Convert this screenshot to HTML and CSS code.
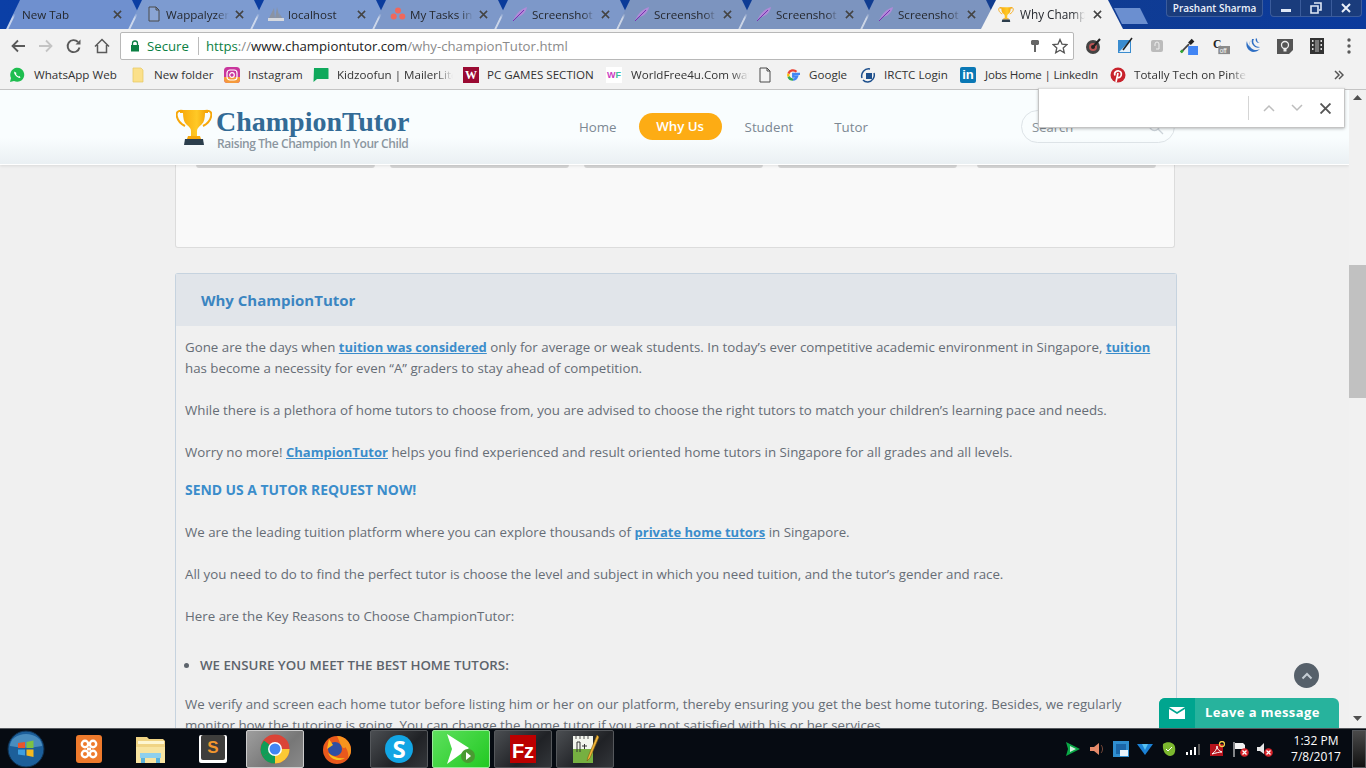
FILE: index.html
```html
<!DOCTYPE html>
<html lang="en">
<head>
<meta charset="utf-8">
<title>Why ChampionTutor</title>
<link rel="stylesheet" href="styles.css">
</head>
<body>
<svg class="defs" width="0" height="0">
  <defs>
    <linearGradient id="gold" x1="0" x2="1" y1="0" y2="0"><stop offset="0" stop-color="#f7a70a"/><stop offset=".6" stop-color="#ffc926"/><stop offset="1" stop-color="#f29e05"/></linearGradient>
    <symbol id="trophy" viewBox="0 0 36 38">
      <path d="M4 3h28v3h-3c0 5-1 9-3 11l-1 1c-2 2-4 3-4 6v5h-6v-5c0-3-2-4-4-6l-1-1C8 15 7 11 7 6H4z" fill="url(#gold)"/>
      <path d="M7 4C1 3 0 6 1 10c1 4 4 7 8 9M29 4c6-1 7 2 6 6-1 4-4 7-8 9" fill="none" stroke="#f7a70a" stroke-width="2"/>
      <path d="M12 29h12l1 3H11z" fill="#f7a70a"/>
      <path d="M9 32h18l1 6H8z" fill="#2c3e4c"/>
    </symbol>
    <symbol id="feather" viewBox="0 0 16 16">
      <path d="M1 15C3 9 8 3 15 1c-1 6-6 10-11 10z" fill="#b08ad8"/>
      <path d="M1 15 12 4" stroke="#7a2fb0" stroke-width="1" fill="none"/>
    </symbol>
    <symbol id="doc" viewBox="0 0 16 16">
      <path d="M3 1h7l3 3v11H3zM10 1v3h3" fill="#fff" fill-opacity=".1" stroke="#4a4a4a"/>
    </symbol>
    <symbol id="close" viewBox="0 0 10 10">
      <path d="M1 1l8 8M9 1l-8 8" stroke="#444" stroke-width="1.7" fill="none"/>
    </symbol>
  </defs>
</svg>

<div class="tabstrip">
  <div class="tab"><span class="tab-title">New Tab</span><svg class="tab-x"><use href="#close"/></svg></div>
  <div class="tab"><svg class="fav"><use href="#doc"/></svg><span class="tab-title">Wappalyzer</span><svg class="tab-x"><use href="#close"/></svg></div>
  <div class="tab"><svg class="fav" viewBox="0 0 16 16"><path d="M0 14 6 2l1 11zM7 13 9 1l3 12zM12 13l-1-6 4 6z" fill="#8a93a3"/><rect x="0" y="12" width="16" height="3" fill="#d5d8de"/></svg><span class="tab-title">localhost</span><svg class="tab-x"><use href="#close"/></svg></div>
  <div class="tab"><svg class="fav" viewBox="0 0 16 16"><circle cx="8" cy="4.5" r="3" fill="#f0685c"/><circle cx="3.7" cy="10.5" r="3" fill="#f0685c"/><circle cx="12.3" cy="10.5" r="3" fill="#f0685c"/></svg><span class="tab-title">My Tasks in</span><svg class="tab-x"><use href="#close"/></svg></div>
  <div class="tab"><svg class="fav"><use href="#feather"/></svg><span class="tab-title">Screenshot</span><svg class="tab-x"><use href="#close"/></svg></div>
  <div class="tab"><svg class="fav"><use href="#feather"/></svg><span class="tab-title">Screenshot</span><svg class="tab-x"><use href="#close"/></svg></div>
  <div class="tab"><svg class="fav"><use href="#feather"/></svg><span class="tab-title">Screenshot</span><svg class="tab-x"><use href="#close"/></svg></div>
  <div class="tab"><svg class="fav"><use href="#feather"/></svg><span class="tab-title">Screenshot</span><svg class="tab-x"><use href="#close"/></svg></div>
  <div class="tab tab-active"><svg class="fav"><use href="#trophy"/></svg><span class="tab-title">Why Champ</span><svg class="tab-x"><use href="#close"/></svg></div>
  <div class="newtab"></div>
  <div class="window-area">
    <div class="user-chip">Prashant Sharma</div>
    <div class="win-controls">
      <span class="win-btn"><svg width="12" height="10" viewBox="0 0 12 10"><rect x="1" y="6" width="10" height="3" fill="#dfe8f5"/></svg></span>
      <span class="win-btn"><svg width="12" height="12" viewBox="0 0 12 12"><path d="M4 1h7v7H9M1 4h7v7H1z" fill="none" stroke="#dfe8f5" stroke-width="1.6"/></svg></span>
      <span class="win-btn"><svg width="12" height="10" viewBox="0 0 12 10"><path d="M2 1l8 8M10 1 2 9" stroke="#e9eff8" stroke-width="2"/></svg></span>
    </div>
  </div>
</div>

<div class="toolbar">
  <div class="nav-btns">
    <svg class="tool" viewBox="0 0 16 16"><path d="M15 8H3M8 2.5 2.5 8 8 13.5" fill="none" stroke="#5a5a5a" stroke-width="1.8"/></svg>
    <svg class="tool" viewBox="0 0 16 16"><path d="M1 8h12M8 2.500 13.500 8 8 13.500" fill="none" stroke="#c4c4c4" stroke-width="1.8"/></svg>
    <svg class="tool" viewBox="0 0 16 16"><path d="M13.500 9.500A6 6 0 1 1 12 4" fill="none" stroke="#5a5a5a" stroke-width="1.900"/><path d="M14.500 1.500v5h-5z" fill="#5a5a5a"/></svg>
    <svg class="tool" viewBox="0 0 16 16"><path d="M1 8.500 8 1.500l7 7M3.500 7v7.500h9V7" fill="none" stroke="#5a5a5a" stroke-width="1.500"/></svg>
  </div>
  <div class="omnibox">
    <svg class="lock" viewBox="0 0 10 12"><path d="M2.500 5V3.500a2.500 2.500 0 0 1 5 0V5" fill="none" stroke="#0b8043" stroke-width="1.300"/><rect x="1" y="5" width="8" height="6.500" fill="#0b8043"/></svg>
    <span class="secure">Secure</span>
    <span class="omni-sep"></span>
    <span class="url"><span class="url-scheme">https</span><span class="url-path">://</span>www.championtutor.com<span class="url-path">/why-championTutor.html</span></span>
    <svg class="key" viewBox="0 0 10 14"><path d="M2 1h6l1 1v3L8 6H6v7H4V6H2L1 5V2z" fill="#666"/></svg>
    <svg class="star" viewBox="0 0 16 16"><path d="M8 1.500l2 4.600 5 .5-3.800 3.300 1.100 4.900L8 12.300l-4.300 2.500 1.100-4.900L1 6.600l5-.5z" fill="none" stroke="#555" stroke-width="1.300"/></svg>
  </div>
  <div class="ext-row">
    <svg class="ext" viewBox="0 0 18 18"><circle cx="9" cy="10" r="7" fill="#444"/><circle cx="9" cy="10" r="4" fill="#b55" /><circle cx="9" cy="10" r="2" fill="#222"/><path d="M9 10l7-8" stroke="#222" stroke-width="2"/></svg>
    <svg class="ext" viewBox="0 0 18 18"><path d="M2 3h13v13H2z" fill="#3a8ccf"/><path d="M3 15 14 4v11z" fill="#e8f2fa"/><path d="M7 13 16 1" stroke="#222" stroke-width="1.500"/></svg>
    <svg class="ext" viewBox="0 0 18 18"><rect x="3" y="3" width="12" height="12" rx="2" fill="#bbb"/><path d="M7 9V7a2 2 0 0 1 4 0v5H8" fill="none" stroke="#eee"/></svg>
    <svg class="ext" viewBox="0 0 20 20"><path d="M1 17 10 8" stroke="#444" stroke-width="2"/><path d="M9 6l4-4 3 3-4 4z" fill="#222"/><path d="M3 15 1 17" stroke="#3a3" stroke-width="3"/><rect x="9" y="10" width="11" height="10" fill="#4285f4"/></svg>
    <svg class="ext" viewBox="0 0 20 20"><text x="1" y="12" class="ext-c">C</text><rect x="7" y="10" width="13" height="9" fill="#8a8a8a"/><text x="8.500" y="17.500" class="ext-off">off</text></svg>
    <svg class="ext" viewBox="0 0 18 18"><path d="M3 4c-2 5 1 10 6 11 3 0 5-1 7-3-3 2-7 1-9-1C5 9 5 6 7 3 5 5 5 8 6 10 4 8 3 6 3 4zM8 2c-1 3 0 6 3 8 2 1 4 1 5 0-3 0-5-1-6-3C9 5 9 4 10 2zM12 1c-1 2 0 4 2 5h2c-2 0-3-2-3-4z" fill="#2f6fc4"/></svg>
    <svg class="ext" viewBox="0 0 18 18"><path d="M1 2h16v11l-4 4H1z" fill="#555"/><circle cx="9" cy="8" r="3.500" fill="none" stroke="#eee" stroke-width="1.300"/><rect x="7.500" y="12" width="3" height="2.500" fill="#eee"/></svg>
    <svg class="ext" viewBox="0 0 18 18"><rect x="2" y="1" width="14" height="16" fill="#333"/><path d="M4 3h1.500v2H4zM4 7h1.500v2H4zM4 11h1.500v2H4zM12.500 3H14v2h-1.500zM12.500 7H14v2h-1.500zM12.500 11H14v2h-1.500z" fill="#ddd"/><rect x="7" y="3" width="4" height="12" fill="#777"/></svg>
    <svg class="ext" viewBox="0 0 18 18"><circle cx="9" cy="3" r="1.700" fill="#5a5a5a"/><circle cx="9" cy="9" r="1.700" fill="#5a5a5a"/><circle cx="9" cy="15" r="1.700" fill="#5a5a5a"/></svg>
  </div>
</div>

<div class="bookmarks">
  <div class="bm bm-wa"><svg class="bm-ic" viewBox="0 0 16 16"><path d="M1 15l1-4A7 7 0 1 1 5 14z" fill="#1ebe4f"/><path d="M5.500 4.500c-1 1 0 3 1.500 4.500s3.500 2.500 4.500 1.500l-1-1.500-1 .5c-1-.5-2-1.500-2.500-2.500l.5-1z" fill="#fff"/></svg><span class="bm-t">WhatsApp Web</span></div>
  <div class="bm bm-nf"><svg class="bm-ic" viewBox="0 0 16 16"><path d="M3 1h8l2 2v12H3z" fill="#fbe08a" stroke="#e6c760" stroke-width=".7"/></svg><span class="bm-t">New folder</span></div>
  <div class="bm bm-ig"><svg class="bm-ic" viewBox="0 0 16 16"><rect width="16" height="16" rx="3.500" fill="#c9359c"/><path d="M0 10h16v2.500A3.500 3.500 0 0 1 12.500 16h-9A3.500 3.500 0 0 1 0 12.500z" fill="#f59a3c"/><rect x="3" y="3" width="10" height="10" rx="3" fill="none" stroke="#fff" stroke-width="1.200"/><circle cx="8" cy="8" r="2.300" fill="none" stroke="#fff" stroke-width="1.200"/></svg><span class="bm-t">Instagram</span></div>
  <div class="bm bm-kz"><svg class="bm-ic" viewBox="0 0 16 16"><path d="M1 1h14a1 1 0 0 1 .5.500V12H4l-3.500 3z" fill="#0fa95c"/></svg><span class="bm-t bm-fade">Kidzoofun | MailerLite</span></div>
  <div class="bm bm-pc"><span class="bm-w">W</span><span class="bm-t">PC GAMES SECTION</span></div>
  <div class="bm bm-wf"><span class="bm-wf-ic"><span class="wf-w">W</span><span class="wf-f">F</span></span><span class="bm-t bm-fade">WorldFree4u.Com watch</span></div>
  <div class="bm bm-dc"><svg class="bm-ic" viewBox="0 0 16 16"><use href="#doc"/></svg></div>
  <div class="bm bm-gg"><svg class="bm-ic" viewBox="0 0 16 16"><path d="M15 6.800H8.200v2.700h3.900C11.500 11.300 10 12.600 8 12.600" fill="none" stroke="#4285f4" stroke-width="2.300"/><path d="M8 12.600A4.800 4.800 0 0 1 3.500 9.500" fill="none" stroke="#34a853" stroke-width="2.300"/><path d="M3.500 9.500a4.800 4.800 0 0 1 0-3" fill="none" stroke="#fbbc05" stroke-width="2.300"/><path d="M3.500 6.500A4.800 4.800 0 0 1 11.500 4.800" fill="none" stroke="#ea4335" stroke-width="2.300"/></svg><span class="bm-t">Google</span></div>
  <div class="bm bm-ir"><svg class="bm-ic" viewBox="0 0 16 16"><path d="M2 11A7 7 0 0 1 10 2M14 6a7 7 0 0 1-6 9A6 6 0 0 1 3 13" fill="none" stroke="#1d4f8c" stroke-width="1.500"/><rect x="6" y="6" width="6" height="6" fill="#1d4f8c"/></svg><span class="bm-t">IRCTC Login</span></div>
  <div class="bm bm-li"><span class="bm-in">in</span><span class="bm-t bm-tight">Jobs Home | LinkedIn</span></div>
  <div class="bm bm-pi"><svg class="bm-ic" viewBox="0 0 16 16"><circle cx="8" cy="8" r="7.500" fill="#c8232c"/><path d="M6 15 8 6M5 8.500C3.500 5 7 3.500 9 4c3 .5 3 5 .8 6.300-1.300.7-2.300 0-2.500-1" fill="none" stroke="#fff" stroke-width="1.700"/></svg><span class="bm-t bm-fade">Totally Tech on Pinterest</span></div>
  <svg class="bm-more" viewBox="0 0 10 10"><path d="M1 1l4 4-4 4M5 1l4 4-4 4" fill="none" stroke="#555" stroke-width="1.500"/></svg>
</div>

<div class="viewport">
  <div class="page">
    <div class="container">
      <div class="top-card">
        <div class="pick-row">
          <div class="pick"></div><div class="pick"></div><div class="pick"></div><div class="pick"></div><div class="pick pick-last"></div>
        </div>
      </div>
      <div class="panel">
        <h2 class="panel-head">Why ChampionTutor</h2>
        <div class="panel-body">
          <p class="para">Gone are the days when <a class="lnk">tuition was considered</a> only for average or weak students. In today’s ever competitive academic environment in Singapore, <a class="lnk">tuition</a> has become a necessity for even “A” graders to stay ahead of competition.</p>
          <p class="para">While there is a plethora of home tutors to choose from, you are advised to choose the right tutors to match your children’s learning pace and needs.</p>
          <p class="para">Worry no more! <a class="lnk">ChampionTutor</a> helps you find experienced and result oriented home tutors in Singapore for all grades and all levels.</p>
          <p class="cta">SEND US A TUTOR REQUEST NOW!</p>
          <p class="para">We are the leading tuition platform where you can explore thousands of <a class="lnk">private home tutors</a> in Singapore.</p>
          <p class="para">All you need to do to find the perfect tutor is choose the level and subject in which you need tuition, and the tutor’s gender and race.</p>
          <p class="para para-tight">Here are the Key Reasons to Choose ChampionTutor:</p>
          <ul class="reasons"><li>WE ENSURE YOU MEET THE BEST HOME TUTORS:</li></ul>
          <p class="para">We verify and screen each home tutor before listing him or her on our platform, thereby ensuring you get the best home tutoring. Besides, we regularly monitor how the tutoring is going. You can change the home tutor if you are not satisfied with his or her services.</p>
        </div>
      </div>
    </div>

    <header class="site-head">
      <div class="logo">
        <svg class="logo-cup"><use href="#trophy"/></svg>
        <div class="logo-text">
          <span class="logo-name">ChampionTutor</span>
          <span class="logo-tag">Raising The Champion In Your Child</span>
        </div>
      </div>
      <nav class="site-nav">
        <a class="nav-item nav-home">Home</a>
        <a class="nav-item nav-active">Why Us</a>
        <a class="nav-item nav-student">Student</a>
        <a class="nav-item">Tutor</a>
      </nav>
      <div class="search">
        <span class="search-ph">Search</span>
        <svg class="search-ic" viewBox="0 0 16 16"><circle cx="6.500" cy="6.500" r="5" fill="none" stroke="#ccd3d9" stroke-width="1.300"/><path d="M10 10l5 5" stroke="#ccd3d9" stroke-width="1.300"/></svg>
      </div>
    </header>

    <button class="to-top"><svg width="12" height="8" viewBox="0 0 12 8"><path d="M1.500 6.500 6 2l4.500 4.500" fill="none" stroke="#c4ccd3" stroke-width="2"/></svg></button>
    <div class="chat">
      <span class="chat-ic"><svg width="16" height="12" viewBox="0 0 16 12"><path d="M0 2V12h16V2L8 7z" fill="#fff"/><path d="M0 0h16L8 5z" fill="#fff"/></svg></span>
      <span class="chat-t">Leave a message</span>
    </div>
  </div>
  <div class="scrollbar">
    <svg class="sb-arrow" width="9" height="5" viewBox="0 0 9 5"><path d="M0 5 4.500 0 9 5z" fill="#505050"/></svg>
    <div class="sb-track"><div class="sb-thumb"></div></div>
    <svg class="sb-arrow" width="9" height="5" viewBox="0 0 9 5"><path d="M0 0 4.500 5 9 0z" fill="#505050"/></svg>
  </div>
</div>

<div class="taskbar">
  <div class="start"><svg width="38" height="38" viewBox="0 0 38 38"><circle cx="19" cy="19" r="18" fill="#1c5f9a" stroke="#0e2f4e"/><path d="M3 16a16 12 0 0 1 32 0 30 10 0 0 1-32 0z" fill="#6fb3dc" fill-opacity=".55"/><path d="M11 13l7-1v6h-7z" fill="#e8552c"/><path d="M19.500 12l7-1.500V18h-7z" fill="#7dc142"/><path d="M11 19.500h7v6l-7-1z" fill="#3d9ee0"/><path d="M19.500 19.500h7V27l-7-1.500z" fill="#f5b81f"/></svg></div>
  <div class="task"><svg width="32" height="30" viewBox="0 0 32 30"><rect x="3" y="1" width="26" height="28" rx="3" fill="#ee7a2c"/><circle cx="12" cy="10" r="3.200" fill="none" stroke="#fff" stroke-width="2.400"/><circle cx="20" cy="10" r="3.200" fill="none" stroke="#fff" stroke-width="2.400"/><circle cx="12" cy="20" r="3.200" fill="none" stroke="#fff" stroke-width="2.400"/><circle cx="20" cy="20" r="3.200" fill="none" stroke="#fff" stroke-width="2.400"/><path d="M14 15h4" stroke="#fff" stroke-width="3"/></svg></div>
  <div class="task"><svg width="32" height="32" viewBox="0 0 32 32"><path d="M1 4h11l2 2h14l2 2v22H1z" fill="#f0d485"/><path d="M3 8h26v3H3z" fill="#fdf6d2"/><path d="M1 14h29v16H1z" fill="#f8e4a0"/><rect x="5" y="20" width="21" height="5" fill="#8fd0ee"/><path d="M6 25h4v5H6zM21 25h4v5h-4z" fill="#5cb3dc"/></svg></div>
  <div class="task"><svg width="30" height="32" viewBox="0 0 30 32"><rect x="1" y="2" width="28" height="28" rx="2" fill="#fff"/><rect x="3" y="2" width="24" height="25" rx="2" fill="#3e3e3c"/><text x="15" y="20" class="subl">S</text></svg></div>
  <div class="task task-lit"><svg width="30" height="30" viewBox="0 0 30 30"><circle cx="15" cy="15" r="14.500" fill="#db4437"/><path d="M2.500 22.500 15 15l7 2-7 12.500A14.500 14.500 0 0 1 2.500 22.500z" fill="#0f9d58"/><path d="M4 6.500 15 15 2.500 22.500A14.500 14.500 0 0 1 4 6.500z" fill="#0f9d58"/><path d="M15 15h14.500A14.500 14.500 0 0 1 15 29.500z" fill="#fcc934"/><path d="M4 6.500A14.500 14.500 0 0 1 29 11H15z" fill="#db4437"/><circle cx="15" cy="15" r="7" fill="#fff"/><circle cx="15" cy="15" r="5.500" fill="#4285f4"/></svg></div>
  <div class="task"><svg width="30" height="32" viewBox="0 0 30 32"><circle cx="15" cy="17" r="14" fill="#e9591c"/><path d="M15 3c7 0 14 6 14 14 0 3-1 6-3 8 1-5-1-9-3-11 0 2-2 1-3 0-2-3-3-7-5-11z" fill="#f7941d"/><circle cx="13" cy="16" r="7" fill="#2f4fa2"/><path d="M6 20c3 7 11 9 17 5-6 1-12-1-17-5z" fill="#f9c21a"/><path d="M7 6l4 6-6 4z" fill="#ffb81f"/></svg></div>
  <div class="task task-dark"><svg width="30" height="30" viewBox="0 0 30 30"><circle cx="15" cy="15" r="14" fill="#12a5e4"/><text x="15" y="24" class="skype">S</text></svg></div>
  <div class="task task-green"><svg width="36" height="32" viewBox="0 0 36 32"><path d="M4 1 26 15 4 31l5-15z" fill="#fff"/><circle cx="25" cy="23" r="7" fill="#4a9a32"/><path d="M23 19l5 4-5 4z" fill="#fff"/></svg></div>
  <div class="task task-dark"><svg width="28" height="30" viewBox="0 0 28 30"><rect x="1" y="1" width="26" height="28" fill="#b00"/><text x="14" y="24" class="fz">Fz</text></svg></div>
  <div class="task task-dark"><svg width="28" height="32" viewBox="0 0 28 32"><rect x="2" y="3" width="20" height="27" fill="#f3f5ee"/><rect x="2" y="16" width="20" height="14" fill="#76b041"/><path d="M5 3v3M9 3v3M13 3v3M17 3v3" stroke="#555"/><path d="M6 9v10M6 9h3v10M11 13h5M13.500 11v5" stroke="#333" fill="none"/><path d="M26 2 17 24l-1 4 3-3 9-21z" fill="#f1b53a" stroke="#7a5a10" stroke-width=".6"/></svg></div>

  <div class="tray">
    <svg class="tray-ic" viewBox="0 0 16 16"><path d="M1 1 15 8 1 15l2-7z" fill="#0aa846"/><path d="M5 5l6 3-6 3z" fill="#cfeedd"/></svg>
    <svg class="tray-ic" viewBox="0 0 16 16"><path d="M1 6h4l5-4v12l-5-4H1z" fill="#e58a6a"/><path d="M12 4c2 2 2 6 0 8" stroke="#7a4a3a" fill="none"/></svg>
    <svg class="tray-ic" viewBox="0 0 16 16"><rect x="0" y="0" width="16" height="16" fill="#2f8ed0"/><path d="M3 3h10v10H3z" fill="#1b66a8"/><rect x="7" y="9" width="8" height="6" fill="#e8f2fa"/></svg>
    <svg class="tray-ic" viewBox="0 0 16 16"><path d="M0 3h16L8 14z" fill="#1b82d6"/><path d="M5 3h6L8 9z" fill="#57c1f0"/></svg>
    <svg class="tray-ic" viewBox="0 0 16 16"><path d="M2 3c4-3 11-2 12 3s-1 9-5 9S1 10 2 3z" fill="#7cb82f"/><path d="M5 8l2 2 4-4" stroke="#fff" fill="none"/></svg>
    <svg class="tray-ic" viewBox="0 0 16 16"><path d="M1 11h2v3H1zM5 9h2v5H5zM9 6h2v8H9z" fill="#fff"/><path d="M13 3h2v11h-2z" fill="#555"/></svg>
    <svg class="tray-ic" viewBox="0 0 16 16"><rect x="1" y="3" width="13" height="12" fill="#b5121b"/><path d="M3 13c3-2 5-5 5-8 0 3 2 5 5 6-3 0-6 1-10 2z" fill="none" stroke="#fff"/><circle cx="13" cy="3" r="2.500" fill="none" stroke="#f5d04a" stroke-width="1.300"/></svg>
    <svg class="tray-ic" viewBox="0 0 16 16"><path d="M1 1v15" stroke="#fff"/><path d="M2 2h8l2 2v4H2z" fill="#f2f2f2"/><circle cx="11.500" cy="11.500" r="4.300" fill="#d8232a"/><path d="M9.500 9.500l4 4M13.500 9.500l-4 4" stroke="#fff" stroke-width="1.300"/></svg>
    <svg class="tray-ic" viewBox="0 0 16 16"><path d="M0 6h3l4-4v11L3 10H0z" fill="#e8e8e8"/><circle cx="11.500" cy="11.500" r="4.300" fill="#d8232a"/><path d="M9.500 9.500l4 4M13.500 9.500l-4 4" stroke="#fff" stroke-width="1.300"/></svg>
    <div class="clock"><span>1:32 PM</span><span>7/8/2017</span></div>
    <div class="show-desktop"></div>
  </div>
</div>

<div class="findbar">
  <span class="find-sep"></span>
  <svg class="find-ic" viewBox="0 0 12 8"><path d="M1 7l5-5 5 5" fill="none" stroke="#bdbdbd" stroke-width="1.500"/></svg>
  <svg class="find-ic" viewBox="0 0 12 8"><path d="M1 1l5 5 5-5" fill="none" stroke="#bdbdbd" stroke-width="1.500"/></svg>
  <svg class="find-x" viewBox="0 0 10 10"><path d="M.5.5l9 9M9.500.5l-9 9" stroke="#555" stroke-width="1.700"/></svg>
</div>
</body>
</html>
```
FILE: styles.css
```css
* { box-sizing: border-box; }
html, body { margin: 0; padding: 0; }
body {
  width: 1366px;
  height: 768px;
  overflow: hidden;
  display: flex;
  flex-direction: column;
  position: relative;
  font-family: "Open Sans", "Noto Sans", sans-serif;
  background: #0c3a96;
}
.defs { position: absolute; }

/* tab strip */
.tabstrip {
  height: 29px;
  flex: none;
  display: flex;
  padding-left: 6px;
  background: linear-gradient(90deg, #0b3fa6 0%, #0a3a98 45%, #123d8e 70%, #0b3a9c 100%);
}
.tab {
  width: 140px;
  height: 29px;
  margin-right: -18px;
  flex: none;
  display: flex;
  align-items: center;
  position: relative;
  padding: 0 17px 1px 18px;
  background: #7d9bd0;
  clip-path: polygon(0 100%, 14px 0, 126px 0, 140px 100%);
  font-size: 11.6px;
  color: #25282e;
}
.tab::before {
  content: "";
  position: absolute;
  left: 7px;
  top: -2px;
  width: 1.5px;
  height: 34px;
  background: linear-gradient(transparent 45%, rgba(255,255,255,.6) 60%);
  transform: rotate(25.8deg);
}
.tab:first-child { padding-left: 16px; background: #6f90cf; }
.tab:nth-child(4), .tab:nth-child(5) { background: #7d98c9; }
.tab:nth-child(6), .tab:nth-child(7), .tab:nth-child(8) { background: #7c94bf; }
.tab-active {
  background: #f2f2f2 !important;
  width: 142px;
  margin-left: -1px;
  clip-path: polygon(0 100%, 15px 0, 127px 0, 142px 100%);
  padding-left: 17px;
  padding-right: 20px;
  font-size: 11.8px;
}
.tab-active::before { display: none; }
.tab-active .fav { margin-right: 6px; }
.fav { width: 16px; height: 16px; flex: none; margin-right: 4px; }
.tab-title {
  flex: 1;
  white-space: nowrap;
  overflow: hidden;
  -webkit-mask-image: linear-gradient(90deg, #000 80%, transparent 100%);
  mask-image: linear-gradient(90deg, #000 80%, transparent 100%);
}
.tab-x { width: 9px; height: 9px; flex: none; margin-left: 6px; margin-right: 7px; }
.tab-active .tab-x { margin-right: 1px; margin-left: 8px; }
.newtab {
  width: 34px;
  height: 16px;
  margin: 8px 0 0 9px;
  flex: none;
  background: #6b8fd0;
  clip-path: polygon(0 0, 26px 0, 34px 100%, 8px 100%);
}
.window-area { flex: 1; display: flex; justify-content: flex-end; gap: 7px; padding-right: 4px; }
.user-chip {
  width: 97px;
  height: 17px;
  flex: none;
  font-size: 10px;
  font-weight: 600;
  color: #eef3fb;
  text-align: center;
  line-height: 17px;
  background: #1a3c7c;
  border: 1px solid #3b5c9c;
  border-top: 0;
  border-radius: 0 0 4px 4px;
  white-space: nowrap;
}
.win-controls {
  width: 92px;
  height: 17px;
  flex: none;
  display: flex;
  background: #1a3c7c;
  border: 1px solid #3b5c9c;
  border-top: 0;
  border-radius: 0 0 4px 4px;
}
.win-btn { flex: 1; display: flex; align-items: center; justify-content: center; }
.win-btn + .win-btn { border-left: 1px solid #3b5c9c; }

/* toolbar */
.toolbar {
  height: 33px;
  flex: none;
  display: flex;
  align-items: center;
  background: #f2f2f2;
  padding-left: 10px;
}
.nav-btns { width: 110px; display: flex; gap: 12px; flex: none; }
.tool { width: 16px; height: 16px; flex: none; }
.omnibox {
  width: 954px;
  height: 28px;
  flex: none;
  display: flex;
  align-items: center;
  background: #fff;
  border: 1px solid #b8b8b8;
  border-radius: 2px;
  padding: 1px 0 0 9px;
  font-size: 13.2px;
}
.lock { width: 10px; height: 12px; margin-right: 7px; flex: none; }
.secure { color: #0b8043; width: 42px; flex: none; white-space: nowrap; }
.omni-sep { width: 1px; height: 18px; background: #bbb; margin: 0 7px 0 9px; flex: none; }
.url { color: #222; white-space: nowrap; flex: 1; }
.url-scheme { color: #0b8043; }
.url-path { color: #8a8a8a; }
.key { width: 10px; height: 14px; margin-right: 12px; flex: none; }
.star { width: 16px; height: 16px; margin-right: 5px; flex: none; }
.ext-row { flex: 1; display: flex; padding-left: 10px; gap: 14px; }
.ext { width: 18px; height: 18px; flex: none; }
.ext-c { font: bold 13px "Liberation Serif", serif; fill: #222; }
.ext-off { font: 7px "Liberation Sans", sans-serif; fill: #fff; }

/* bookmarks */
.bookmarks {
  height: 28px;
  flex: none;
  display: flex;
  align-items: center;
  padding: 0 0 2px 9px;
  background: #f2f2f2;
  border-bottom: 1px solid #c4c4c4;
  font-size: 11.6px;
  color: #333;
  position: relative;
}
.bm { display: flex; align-items: center; flex: none; white-space: nowrap; overflow: hidden; }
.bm-ic { width: 16px; height: 16px; flex: none; margin-right: 8px; }
.bm-wa .bm-ic { margin-right: 9px; }
.bm-t { white-space: nowrap; }
.bm-tight { letter-spacing: -.2px; }
.bm-fade {
  overflow: hidden;
  flex: 1;
  -webkit-mask-image: linear-gradient(90deg, #000 85%, transparent 100%);
  mask-image: linear-gradient(90deg, #000 85%, transparent 100%);
}
.bm-wa { width: 121px; }
.bm-nf { width: 94px; }
.bm-ig { width: 89px; }
.bm-kz { width: 150px; padding-right: 10px; }
.bm-pc { width: 143px; }
.bm-w {
  width: 16px; height: 16px; flex: none; margin-right: 8px;
  background: #9a0a32; color: #fff;
  font: bold 12px/16px "Liberation Serif", serif; text-align: center;
}
.bm-wf { width: 151px; padding-right: 8px; }
.bm-wf-ic {
  width: 16px; height: 16px; flex: none; margin-right: 9px;
  background: #fff; text-align: center;
  font: bold 9px/16px "Liberation Sans", sans-serif;
}
.wf-w { color: #c93bbf; }
.wf-f { color: #3dbb9f; }
.bm-dc { width: 28px; }
.bm-gg { width: 75px; }
.bm-ir { width: 100px; }
.bm-li { width: 150px; }
.bm-in {
  width: 16px; height: 16px; flex: none; margin-right: 9px;
  background: #0a78b5; color: #fff; border-radius: 2px;
  font: bold 13px/16px "Liberation Sans", sans-serif; text-align: center;
}
.bm-pi { width: 137px; }
.bm-more { width: 10px; height: 10px; position: absolute; left: 1334px; top: 8px; }

/* viewport */
.viewport { height: 638px; flex: none; display: flex; }
.page {
  width: 1349px;
  height: 638px;
  flex: none;
  position: relative;
  overflow: hidden;
  background: #f0f0f0;
}
.container { width: 1002px; margin-left: 175px; }
.top-card {
  width: 1000px;
  height: 158px;
  background: #f9f9f9;
  border: 1px solid #dcdcdc;
  border-top: 0;
  border-radius: 0 0 3px 3px;
}
.pick-row { display: flex; padding-left: 20px; }
.pick {
  width: 179px;
  height: 78px;
  flex: none;
  background: #ececec;
  border: 1px solid #d8d8d8;
  border-bottom: 3px solid #d6d6d6;
  border-radius: 0 0 3px 3px;
}
.pick + .pick { margin-left: 15px; }
.pick + .pick-last { margin-left: 20px; }
.panel {
  margin-top: 25px;
  width: 1002px;
  border: 1px solid #c6d3df;
  border-radius: 3px 3px 0 0;
  border-bottom: 0;
}
.panel-head {
  margin: 0;
  height: 52px;
  padding-left: 25px;
  background: #e1e5ea;
  font-size: 15px;
  font-weight: 700;
  line-height: 52px;
  color: #3b85c1;
}
.panel-body { padding: 11px 9px 0 9px; font-size: 13.3px; line-height: 21px; color: #666d76; }
.para { margin: 0 0 21px; }
.para-tight { margin-bottom: 28px; }
.cta { margin: -5px 0 22px; font-size: 13.9px; font-weight: 700; color: #3b8dcb; line-height: 21px; }
.lnk { color: #3b8dcb; font-size: 13px; font-weight: 700; text-decoration: underline; }
.reasons { margin: 0 0 18px; padding: 0 0 0 15px; font-weight: 600; color: #5d646c; }

/* fixed site header */
.site-head {
  position: absolute;
  left: 0;
  top: 0;
  width: 1349px;
  height: 74px;
  display: flex;
  background: linear-gradient(180deg, #f9fdfe 0%, #f9fdfe 65%, #eaf0f3 100%);
  box-shadow: 0 1px 0 #fff, 0 2px 3px rgba(0,0,0,.1);
}
.logo { width: 403px; margin-left: 176px; display: flex; flex: none; padding-top: 16px; }
.logo-cup { width: 36px; height: 38px; flex: none; margin-right: 4px; margin-top: 1px; }
.logo-text { display: flex; flex-direction: column; }
.logo-name {
  font: 700 28px/31px "Liberation Serif", serif;
  color: #336b96;
  white-space: nowrap;
}
.logo-tag {
  font-size: 12px;
  line-height: 14px;
  font-weight: 600;
  letter-spacing: -.42px;
  color: #8b969f;
  padding-left: 1px;
  white-space: nowrap;
}
.site-nav { display: flex; align-items: center; height: 74px; width: 442px; flex: none; padding-bottom: 1px; font-size: 13.3px; color: #7c8893; }
.nav-item { margin-right: 23px; }
.nav-home { margin-right: 22px; }
.nav-active {
  width: 83px;
  height: 27px;
  border-radius: 14px;
  background: #fdac14;
  color: #fff;
  font-weight: 600;
  text-align: center;
  line-height: 27px;
}
.nav-student { margin-right: 41px; }
.search {
  width: 154px;
  height: 33px;
  margin-top: 20px;
  border: 1px solid #dde3e7;
  border-radius: 17px;
  display: flex;
  align-items: center;
  justify-content: space-between;
  padding: 0 10px;
  font-size: 13px;
  color: #8a9299;
}
.search-ic { width: 16px; height: 16px; flex: none; }

/* overlays */
.to-top {
  position: absolute;
  left: 1294px;
  top: 573px;
  width: 25px;
  height: 25px;
  padding: 0;
  border: 0;
  border-radius: 50%;
  background: #56606a;
  display: flex;
  align-items: center;
  justify-content: center;
}
.chat {
  position: absolute;
  left: 1159px;
  top: 608px;
  width: 180px;
  height: 30px;
  display: flex;
  background: #27b39d;
  border-radius: 6px 6px 0 0;
  overflow: hidden;
}
.chat-ic { width: 36px; background: #00a58f; display: flex; align-items: center; justify-content: center; flex: none; }
.chat-t { padding-left: 10px; font-size: 13px; letter-spacing: .4px; font-weight: 700; line-height: 29px; color: #fff; white-space: nowrap; }

/* scrollbar */
.scrollbar { width: 17px; flex: none; background: #f1f1f1; display: flex; flex-direction: column; align-items: center; padding: 5px 0 7px; }
.sb-arrow { flex: none; }
.sb-track { flex: 1; width: 100%; padding-top: 165px; }
.sb-thumb { height: 133px; background: #c1c1c1; }

/* taskbar */
.taskbar {
  height: 40px;
  flex: none;
  display: flex;
  align-items: center;
  background: #060b12;
  border-top: 1px solid #56595e;
  padding-left: 7px;
}
.start { width: 53px; flex: none; display: flex; align-items: center; }
.task {
  width: 58px;
  height: 38px;
  margin-right: 4px;
  flex: none;
  display: flex;
  align-items: center;
  justify-content: center;
  border-radius: 2px;
}
.task-lit { background: linear-gradient(135deg, #9e9e9e, #777 60%, #8a8a8a); border: 1px solid #ccc; }
.task-dark { background: linear-gradient(135deg, #4b4e52, #202226 60%, #33363a); border: 1px solid #55585c; }
.task-green { background: linear-gradient(135deg, #5de05d, #22c922); border: 1px solid #9ae89a; }
.subl { font: bold 17px "Liberation Sans", sans-serif; fill: #f2972e; text-anchor: middle; }
.skype { font: bold 24px "Open Sans", sans-serif; fill: #fff; text-anchor: middle; }
.fz { font: bold 20px "Liberation Sans", sans-serif; fill: #fff; text-anchor: middle; }
.tray { flex: 1; display: flex; align-items: center; justify-content: flex-end; gap: 8px; height: 38px; }
.tray-ic { width: 16px; height: 16px; flex: none; }
.clock {
  width: 78px;
  flex: none;
  margin-left: -4px;
  display: flex;
  flex-direction: column;
  align-items: center;
  font-size: 12px;
  line-height: 16px;
  color: #fff;
  white-space: nowrap;
}
.show-desktop { width: 14px; height: 38px; flex: none; margin-left: -11px; border: 1px solid #55585c; background: linear-gradient(#4a4a4a, #111); }

/* find bar */
.findbar {
  position: absolute;
  left: 1038px;
  top: 88px;
  width: 307px;
  height: 40px;
  background: #fff;
  border: 1px solid #c4c4c4;
  border-top-color: #ddd;
  border-radius: 0 0 2px 2px;
  box-shadow: 0 1px 3px rgba(0,0,0,.25);
  display: flex;
  align-items: center;
  padding-left: 209px;
}
.find-sep { width: 1px; height: 24px; background: #d5d5d5; flex: none; margin-right: 14px; }
.find-ic { width: 12px; height: 8px; flex: none; margin-right: 16px; }
.find-x { width: 11px; height: 11px; flex: none; margin-left: 1px; }
```
